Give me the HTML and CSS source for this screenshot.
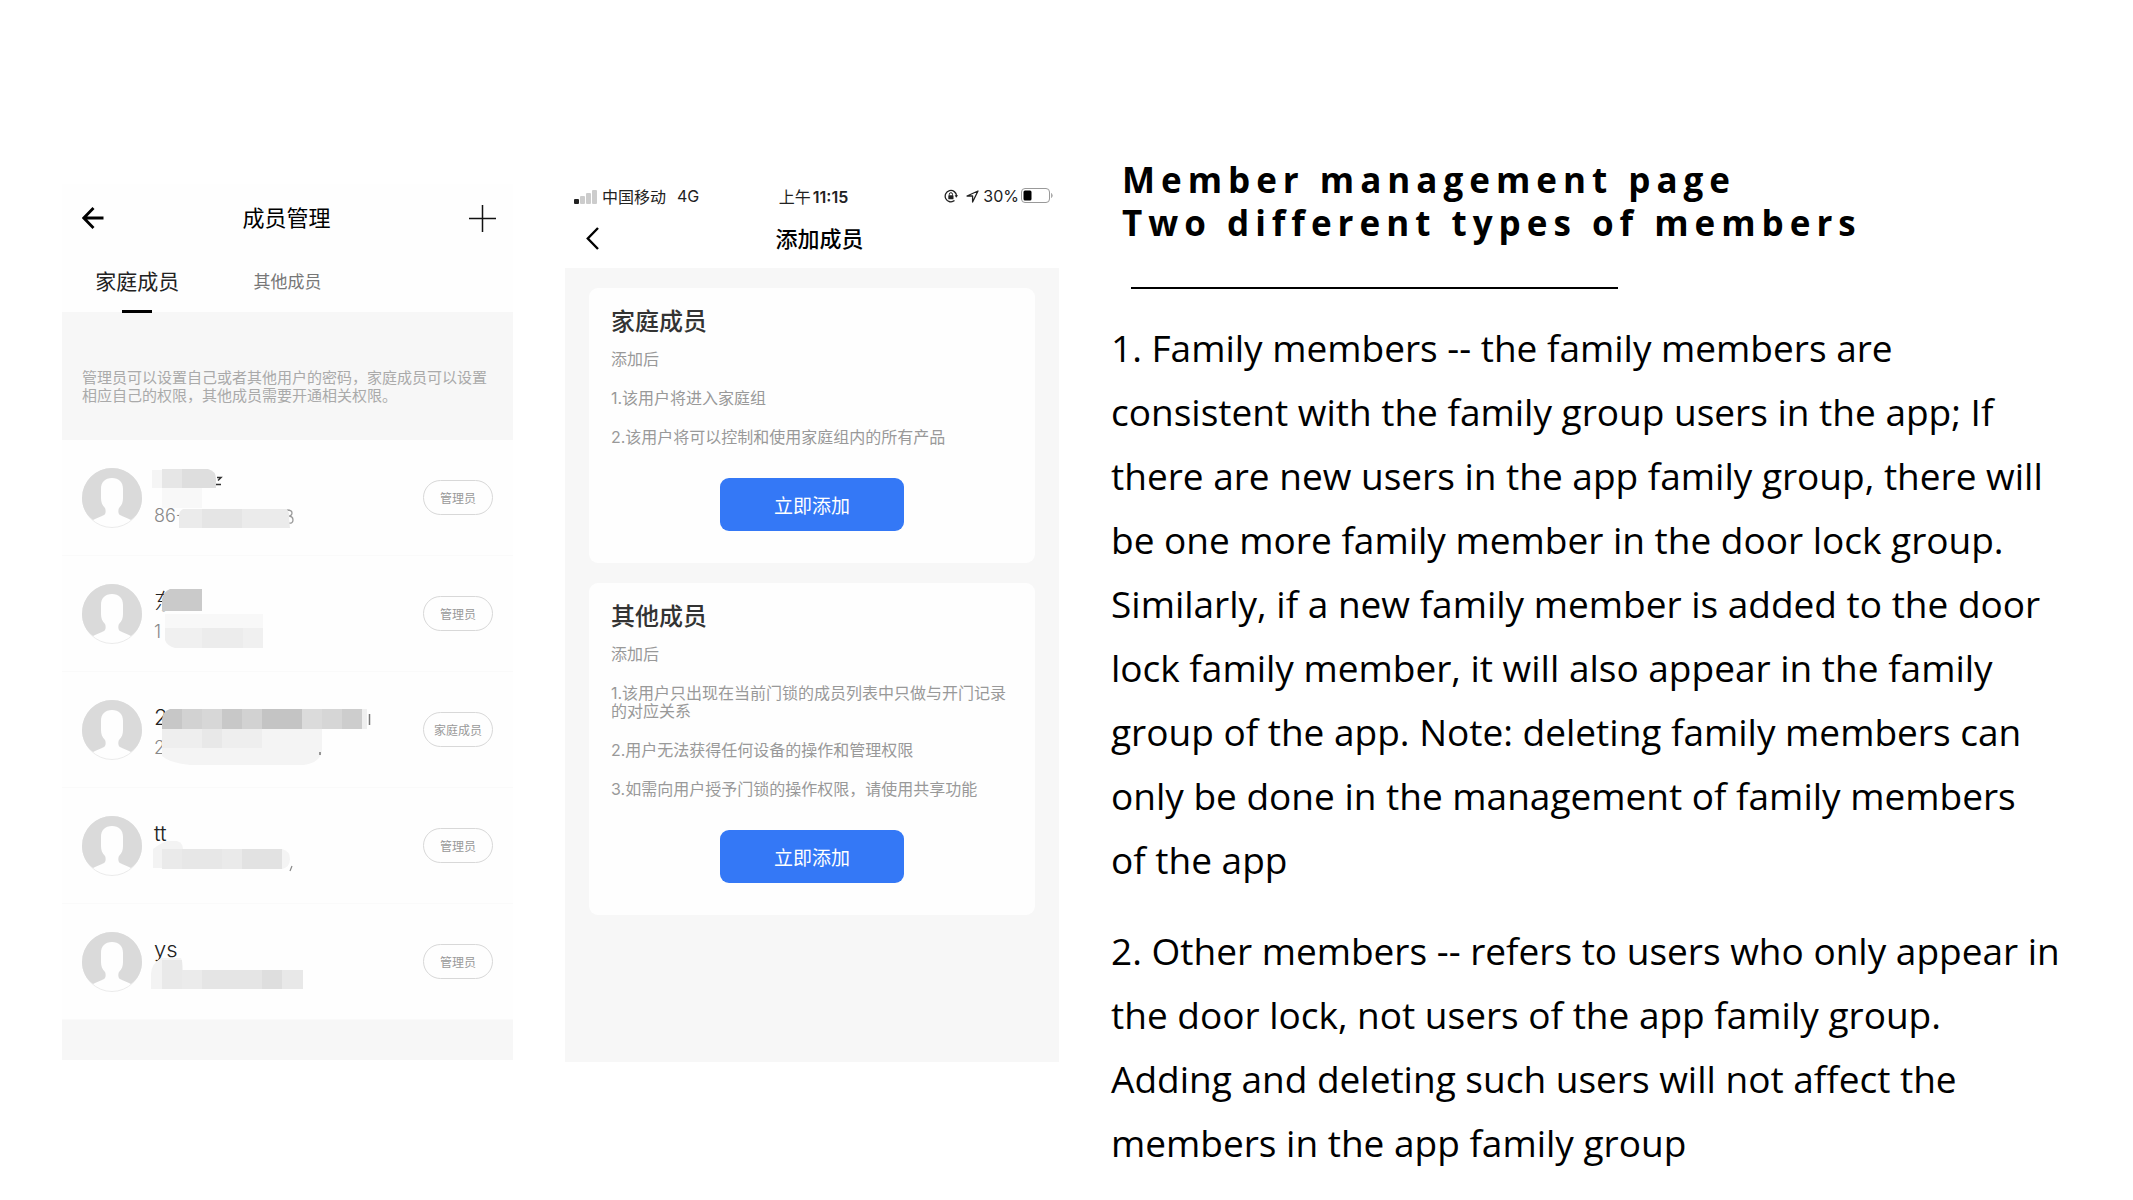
FILE: index.html
```html
<!DOCTYPE html>
<html lang="en">

<head>
    <meta charset="UTF-8">
    <meta name="viewport" content="width=device-width, initial-scale=1.0">
    <title>Member management page</title>
    <link rel="stylesheet" href="styles.css">
</head>

<body>
    <!-- avatar shared by every member row -->
    <svg class="defs" width="0" height="0" aria-hidden="true">
        <symbol id="avatar" viewBox="0 0 60 60">
            <circle cx="30" cy="30" r="29.5" fill="#fefefe" stroke="#ebebeb" />
            <path fill="#dadada" d="M11 52C4 47 0 39 0 30a30 30 0 0 1 60 0c0 9-4 17-11 22-3-2-8-3-11-5-2-1-2-5-1-7 3-3 4-6 4-10V21c0-7-4-11-11-11s-11 4-11 11v9c0 4 1 7 4 10 1 2 1 6-1 7-3 2-8 3-11 5z" />
        </symbol>
    </svg>

    <main class="page">
        <section class="phone members" lang="zh-CN">
            <header class="members-header">
                <button class="icon-btn" aria-label="返回">
                    <svg width="22" height="22" viewBox="0 0 22 22" fill="none" stroke="#000" stroke-width="2.8">
                        <path d="M21.500 11H2M11.500 1L1.800 11l9.700 10" />
                    </svg>
                </button>
                <h2>成员管理</h2>
                <button class="icon-btn" aria-label="添加">
                    <svg width="27" height="27" viewBox="0 0 27 27" fill="none" stroke="#111" stroke-width="1.500">
                        <path d="M13.500 0v27M0 13.500h27" />
                    </svg>
                </button>
            </header>
            <nav class="tabs">
                <button class="tab active">家庭成员</button>
                <button class="tab">其他成员</button>
            </nav>
            <p class="note">管理员可以设置自己或者其他用户的密码，家庭成员可以设置<br>相应自己的权限，其他成员需要开通相关权限。</p>

            <ul class="member-list">
                <li class="member">
                    <svg class="avatar"><use href="#avatar" /></svg>
                    <div class="info">
                        <span class="name">&nbsp;</span>
                        <span class="account">86-</span>
                    </div>
                    <svg class="mosaic" width="240" height="116">
                        <path d="M67 37.500h4l-3 3M66 44.500h5" stroke="#333" stroke-width="1.500" fill="none" />
                        <rect x="2" y="30" width="10" height="18" fill="#f5f5f5" />
                        <rect x="12" y="48" width="40" height="20" fill="#f8f8f8" />
                        <rect x="12" y="29" width="20" height="19" fill="#e6e6e6" />
                        <path d="M32 29h26q8 2 8 10v9H32z" fill="#dedede" />
                        <path d="M137 70q5 0 5 3t-4 3q5 0 5 4t-5 3" stroke="#999" stroke-width="1.300" fill="none" />
                        <path d="M33 69h104q3 5 2 9l1 10H29V76q0-5 4-7z" fill="#ebebeb" />
                        <rect x="52" y="69" width="40" height="19" fill="#e5e5e5" />
                    </svg>
                    <button class="role">管理员</button>
                </li>
                <li class="member">
                    <svg class="avatar"><use href="#avatar" /></svg>
                    <div class="info">
                        <span class="name">东</span>
                        <span class="account">1</span>
                    </div>
                    <svg class="mosaic" width="240" height="116">
                        <path d="M20 33h32v22H12V43q2-8 8-10z" fill="#cacaca" />
                        <path d="M15 72h98V92H25q-8-2-10-8z" fill="#f0f0f0" />
                        <rect x="15" y="58" width="98" height="14" fill="#f8f8f8" />
                        <rect x="52" y="72" width="41" height="20" fill="#ececec" />
                    </svg>
                    <button class="role">管理员</button>
                </li>
                <li class="member">
                    <svg class="avatar"><use href="#avatar" /></svg>
                    <div class="info">
                        <span class="name">2</span>
                        <span class="account">2</span>
                    </div>
                    <svg class="mosaic" width="240" height="116">
                        <path d="M12 57h160v20q0 13-18 16H40q-20-2-28-9z" fill="#f4f4f4" />
                        <rect x="12" y="57" width="100" height="19" fill="#eeeeee" />
                        <rect x="52" y="57" width="20" height="19" fill="#e8e8e8" />
                        <path d="M20 37h12v20H12V47q1-8 8-10z" fill="#c7c7c7" />
                        <rect x="32" y="37" width="20" height="20" fill="#d2d2d2" />
                        <rect x="52" y="37" width="20" height="20" fill="#d7d7d7" />
                        <rect x="72" y="37" width="20" height="20" fill="#c8c8c8" />
                        <rect x="92" y="37" width="20" height="20" fill="#d2d2d2" />
                        <rect x="112" y="37" width="40" height="20" fill="#c4c4c4" />
                        <rect x="152" y="37" width="20" height="20" fill="#dbdbdb" />
                        <rect x="172" y="37" width="20" height="20" fill="#d6d6d6" />
                        <rect x="192" y="37" width="20" height="20" fill="#cdcdcd" />
                        <rect x="212" y="37" width="5" height="20" fill="#efefef" />
                        <path d="M219.500 42v11M170 80v3" stroke="#777" stroke-width="1.500" />
                    </svg>
                    <button class="role">家庭成员</button>
                </li>
                <li class="member">
                    <svg class="avatar"><use href="#avatar" /></svg>
                    <div class="info">
                        <span class="name">tt</span>
                        <span class="account">&nbsp;</span>
                    </div>
                    <svg class="mosaic" width="240" height="116">
                        <path d="M3 61q8-6 14-8h10q6 2 6 8v19H3z" fill="#f3f3f3" />
                        <rect x="12" y="61" width="120" height="20" fill="#eaeaea" />
                        <rect x="32" y="61" width="40" height="20" fill="#e7e7e7" />
                        <rect x="92" y="61" width="40" height="20" fill="#e2e2e2" />
                        <path d="M132 61q8 2 8 10t-8 10z" fill="#f4f4f4" />
                        <path d="M142 78l-2 5" stroke="#888" stroke-width="1.200" />
                    </svg>
                    <button class="role">管理员</button>
                </li>
                <li class="member">
                    <svg class="avatar"><use href="#avatar" /></svg>
                    <div class="info">
                        <span class="name">ys</span>
                        <span class="account">&nbsp;</span>
                    </div>
                    <svg class="mosaic" width="240" height="116">
                        <path d="M1 85V70q0-10 10-16h20q2 4 2 12v19z" fill="#f3f3f3" />
                        <rect x="12" y="66" width="141" height="19" fill="#ebebeb" />
                        <rect x="12" y="56" width="20" height="29" fill="#e9e9e9" />
                        <rect x="52" y="66" width="60" height="19" fill="#e5e5e5" />
                        <rect x="112" y="66" width="20" height="19" fill="#dedede" />
                        <rect x="132" y="66" width="21" height="19" fill="#e8e8e8" />
                    </svg>
                    <button class="role">管理员</button>
                </li>
            </ul>
            <div class="members-footer"></div>
        </section>

        <section class="phone add" lang="zh-CN">
            <div class="status-bar">
                <div class="carrier">
                    <svg width="23" height="15" viewBox="0 0 23 15">
                        <rect x="0" y="10" width="5" height="5" rx="1" fill="#222" />
                        <rect x="6" y="7" width="5" height="8" rx="1" fill="#ccc" />
                        <rect x="12" y="4" width="5" height="11" rx="1" fill="#ccc" />
                        <rect x="18" y="1" width="5" height="14" rx="1" fill="#ccc" />
                    </svg>
                    <span>中国移动</span>
                    <span class="network">4G</span>
                </div>
                <div class="time">上午<b>11:15</b></div>
                <div class="power">
                    <svg width="14" height="14" viewBox="0 0 14 14">
                        <path d="M10.500 11.600A5.700 5.700 0 1 1 12.600 7" fill="none" stroke="#222" stroke-width="1.300" />
                        <path d="M10.600 6.300h3.400l-1.700 2.500z" fill="#222" />
                        <rect x="4.300" y="6.300" width="5.200" height="4" rx=".6" fill="#222" />
                        <path d="M5.300 6.500V5.300a1.600 1.600 0 0 1 3.200 0v1.200" fill="none" stroke="#222" />
                    </svg>
                    <svg width="13" height="13" viewBox="0 0 13 13">
                        <path d="M12 1L1 6h5.600v6z" fill="none" stroke="#222" stroke-width="1.300" stroke-linejoin="round" />
                    </svg>
                    <span class="percent">30%</span>
                    <svg width="32" height="16" viewBox="0 0 32 16">
                        <rect x=".5" y=".5" width="28" height="14" rx="3.500" fill="none" stroke="#999" />
                        <rect x="2.500" y="2.500" width="8" height="10" rx="1.500" fill="#000" />
                        <path d="M30.500 5.500q1.500 2 0 4z" fill="#aaa" stroke="#aaa" />
                    </svg>
                </div>
            </div>
            <header class="add-header">
                <button class="icon-btn" aria-label="返回">
                    <svg width="13" height="23" viewBox="0 0 13 23" fill="none" stroke="#000" stroke-width="2.400">
                        <path d="M12 1L1.800 11.500 12 22" />
                    </svg>
                </button>
                <h2>添加成员</h2>
            </header>
            <div class="cards">
                <article class="card">
                    <h3>家庭成员</h3>
                    <p>添加后</p>
                    <p>1.该用户将进入家庭组</p>
                    <p>2.该用户将可以控制和使用家庭组内的所有产品</p>
                    <button class="btn">立即添加</button>
                </article>
                <article class="card">
                    <h3>其他成员</h3>
                    <p>添加后</p>
                    <p>1.该用户只出现在当前门锁的成员列表中只做与开门记录<br>的对应关系</p>
                    <p>2.用户无法获得任何设备的操作和管理权限</p>
                    <p>3.如需向用户授予门锁的操作权限，请使用共享功能</p>
                    <button class="btn">立即添加</button>
                </article>
            </div>
        </section>

        <section class="description">
            <h1>Member management page<br>Two different types of members</h1>
            <hr>
            <p>1. Family members -- the family members are<br>
                consistent with the family group users in the app; If<br>
                there are new users in the app family group, there will<br>
                be one more family member in the door lock group.<br>
                Similarly, if a new family member is added to the door<br>
                lock family member, it will also appear in the family<br>
                group of the app. Note: deleting family members can<br>
                only be done in the management of family members<br>
                of the app</p>
            <p>2. Other members -- refers to users who only appear in<br>
                the door lock, not users of the app family group.<br>
                Adding and deleting such users will not affect the<br>
                members in the app family group</p>
        </section>
    </main>
</body>

</html>
```
FILE: styles.css
```css
* {
    box-sizing: border-box;
}

body {
    margin: 0;
    background-color: #fff;
    color: #000;
    font-family: Inter, "Noto Sans CJK SC", sans-serif;
}

h1, h2, h3, p, ul {
    margin: 0;
    padding: 0;
    font-weight: normal;
}

button {
    font-family: inherit;
    border: none;
    background: none;
    padding: 0;
    cursor: pointer;
}

svg {
    display: block;
    flex-shrink: 0;
}

.defs {
    position: absolute;
}

.page {
    display: grid;
    grid-template-columns: 451fr 494fr 950fr;
    column-gap: 52px;
    align-items: start;
    padding: 158px 72px 0 62px;
}

.phone h2 {
    font-size: 22px;
    line-height: 32px;
}

/* member list screen */
.members {
    margin-top: 26px;
    background-color: #fefefe;
}

.members-header {
    display: flex;
    justify-content: space-between;
    align-items: center;
    padding: 18px 17px 0 20px;
}

.tabs {
    display: grid;
    grid-template-columns: repeat(3, 1fr);
    height: 78px;
}

.tab {
    position: relative;
    padding-top: 14px;
    font-size: 17px;
    color: #777;
}

.tab.active {
    font-size: 21px;
    color: #222;
}

.tab.active::after {
    content: "";
    position: absolute;
    left: 50%;
    bottom: -1px;
    width: 30px;
    height: 3px;
    margin-left: -15px;
    background-color: #000;
}

.note {
    padding: 57px 0 35px 20px;
    background-color: #f7f7f7;
    font-size: 15px;
    line-height: 18px;
    color: #aaa;
    white-space: nowrap;
}

.member-list {
    list-style: none;
}

.member {
    position: relative;
    display: flex;
    align-items: center;
    gap: 12px;
    height: 116px;
    padding: 0 20px;
    border-bottom: 1px solid #fafafa;
}

.avatar {
    width: 60px;
    height: 60px;
}

.info {
    display: flex;
    flex-direction: column;
    flex: 1;
    gap: 6px;
    padding-top: 3px;
}

.name {
    font-size: 22px;
    font-weight: 300;
    line-height: 28px;
    color: #222;
}

.account {
    font-size: 18px;
    font-weight: 300;
    line-height: 22px;
    color: #888;
}

/* hides the personal data, lies over the text */
.mosaic {
    position: absolute;
    left: 88px;
    top: 0;
}

.role {
    width: 70px;
    height: 35px;
    border: 1px solid #d8d8d8;
    border-radius: 18px;
    font-size: 12px;
    color: #999;
}

.members-footer {
    height: 40px;
    background-color: #f7f7f7;
}

/* add member screen */
.add {
    margin-top: 25px;
}

.status-bar {
    display: grid;
    grid-template-columns: 1fr auto 1fr;
    align-items: center;
    height: 26px;
    padding: 0 6px 0 9px;
    font-size: 16px;
    color: #222;
}

.carrier, .power {
    display: flex;
    align-items: center;
    gap: 5px;
}

.network {
    margin-left: 6px;
}

.power {
    justify-content: flex-end;
    gap: 4px;
}

.power svg:first-child {
    margin-right: 4px;
}

.percent {
    margin-right: -2px;
}

.time b {
    margin-left: 2px;
    font-weight: 600;
}

.add-header {
    display: flex;
    align-items: center;
    height: 59px;
    padding: 0 19px 0 21px;
}

.add-header h2 {
    flex: 1;
    text-align: center;
    font-weight: 500;
}

.cards {
    display: flex;
    flex-direction: column;
    gap: 20px;
    min-height: 794px;
    padding: 20px 24px;
    background-color: #f7f7f7;
}

.card {
    display: flex;
    flex-direction: column;
    padding: 17px 22px 32px;
    border-radius: 9px;
    background-color: #fefefe;
}

.card h3 {
    margin-bottom: -10px;
    font-size: 24px;
    font-weight: 500;
    line-height: 34px;
    color: #333;
}

.card p {
    margin-top: 21px;
    font-size: 16px;
    line-height: 18px;
    color: #999;
    white-space: nowrap;
}

.btn {
    align-self: center;
    width: 184px;
    height: 53px;
    margin-top: 32px;
    border-radius: 9px;
    background-color: #3478f6;
    font-size: 19px;
    color: #fff;
}

/* text on the right */
.description {
    font-family: "Open Sans", "Noto Sans", sans-serif;
    white-space: nowrap;
}

.description h1 {
    padding-left: 11px;
    font-size: 35px;
    font-weight: bold;
    line-height: 43px;
    letter-spacing: 6px;
}

.description hr {
    width: 487px;
    height: 2px;
    margin: 43px 0 27px 20px;
    border: none;
    background-color: #000;
}

.description p {
    margin-bottom: 27px;
    font-size: 37px;
    line-height: 64px;
}
```
